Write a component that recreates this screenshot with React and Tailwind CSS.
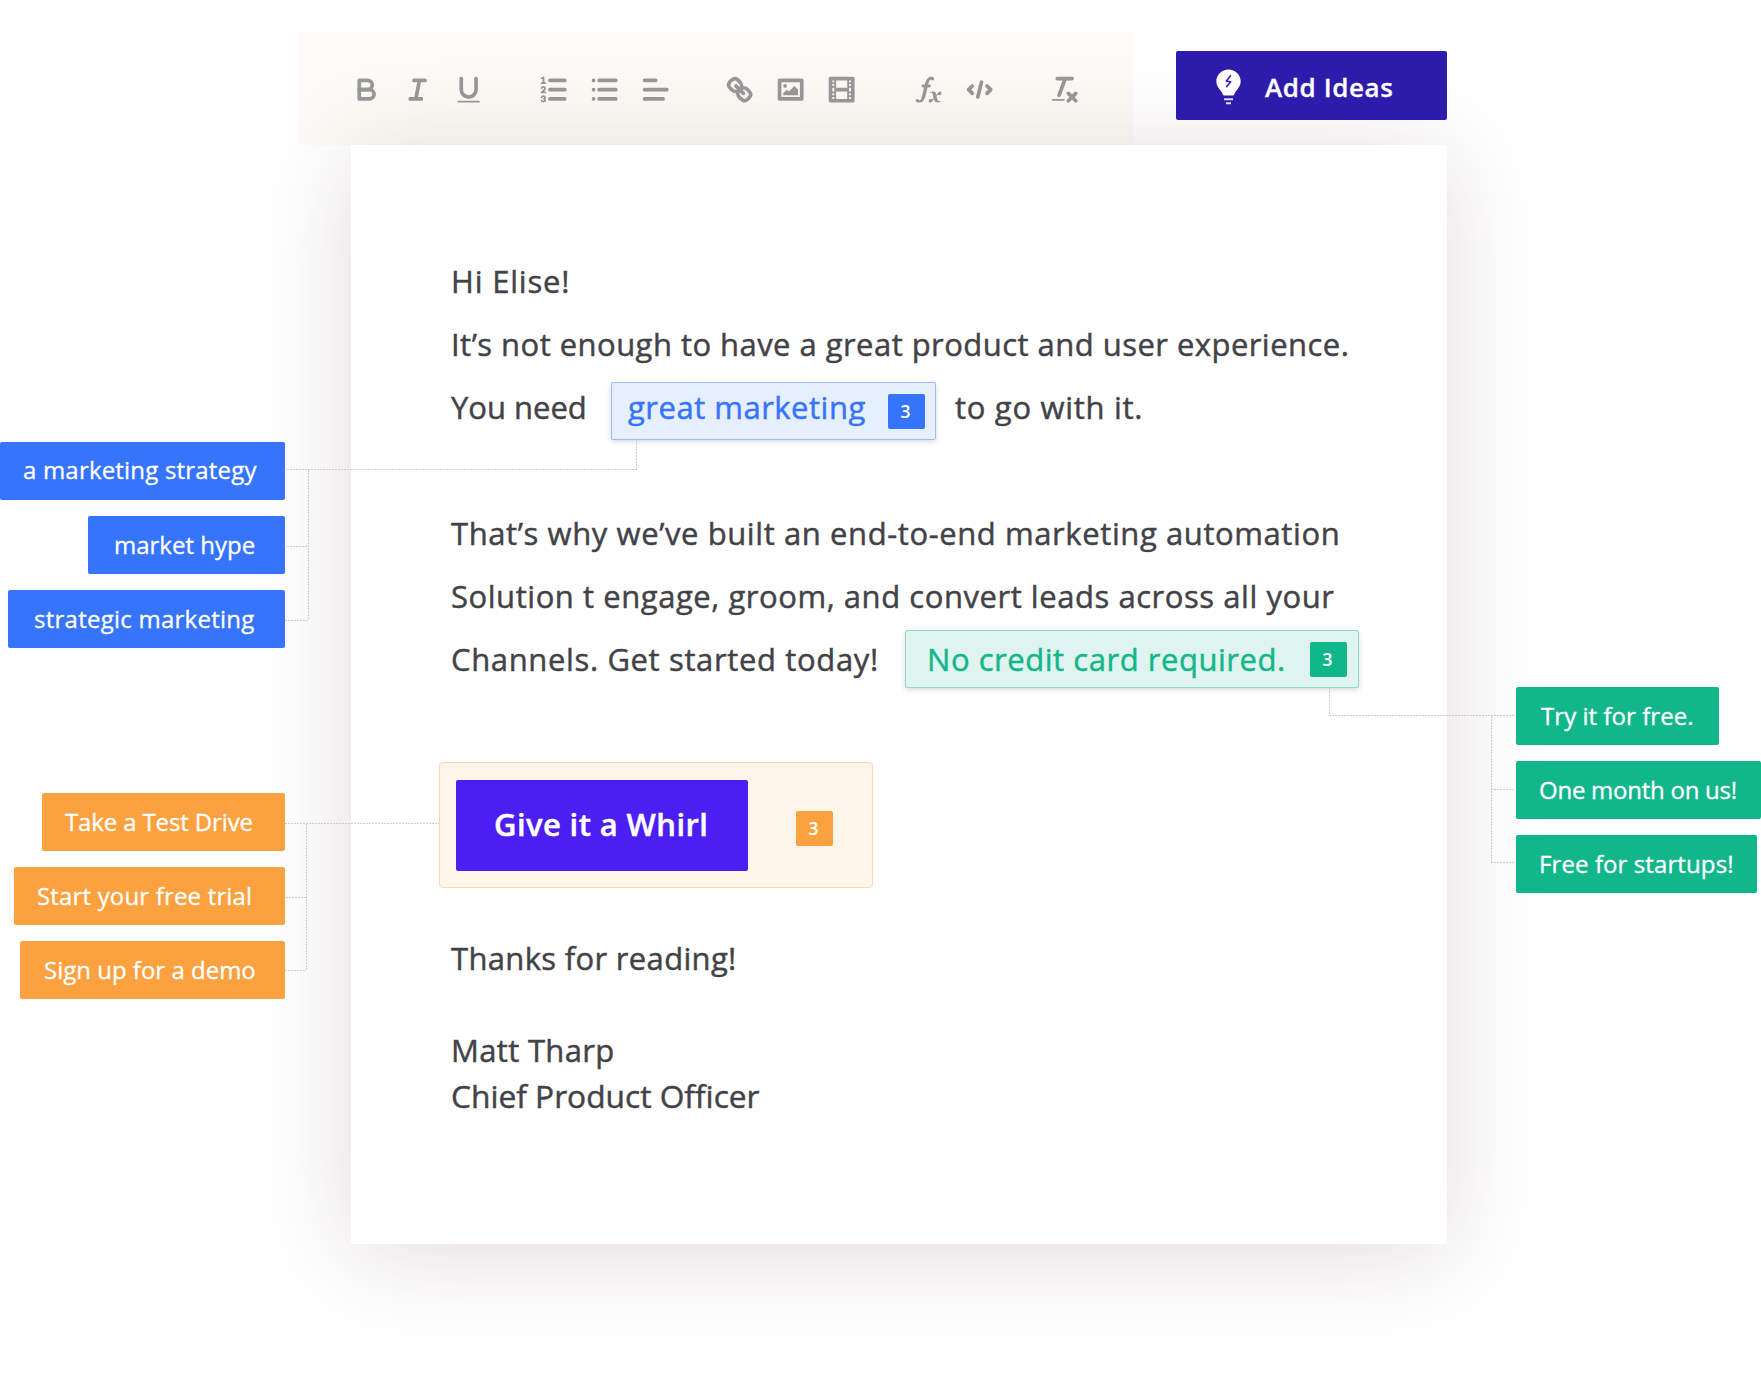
const icons = {
  bold: (
    <>
      <path d="M5,4H9.5A2.5,2.5,0,0,1,12,6.5v0A2.5,2.5,0,0,1,9.5,9H5V4Z" />
      <path d="M5,9h5.5A2.5,2.5,0,0,1,13,11.5v0A2.5,2.5,0,0,1,10.5,14H5V9Z" />
    </>
  ),
  italic: <path d="M7 4H13M5 14H11M8 14L10 4" />,
  underline: (
    <>
      <path d="M5,3V9a4.012,4.012,0,0,0,4,4H9a4.012,4.012,0,0,0,4-4V3" />
      <rect className="fill-current stroke-none" height="1" rx="0.5" width="12" x="3" y="15" />
    </>
  ),
  ordered: (
    <>
      <path d="M7 4H15M7 9H15M7 14H15" />
      <path strokeWidth="1" d="M2.5 5.5H4.5" />
      <path
        className="fill-current stroke-none"
        d="M3.5,6A0.5,0.5,0,0,1,3,5.5V3.085l-0.276.138A0.5,0.5,0,0,1,2.053,3c-0.124-.247-0.023-0.324.224-0.447l1-.5A0.5,0.5,0,0,1,4,2.5v3A0.5,0.5,0,0,1,3.5,6Z"
      />
      <path strokeWidth="1" d="M4.5,10.5h-2c0-.234,1.85-1.076,1.85-2.234A0.959,0.959,0,0,0,2.5,8.156" />
      <path
        strokeWidth="1"
        d="M2.5,14.846a0.959,0.959,0,0,0,1.85-.109A0.7,0.7,0,0,0,3.75,14a0.688,0.688,0,0,0,.6-0.736,0.959,0.959,0,0,0-1.85-.109"
      />
    </>
  ),
  bullet: <path d="M6 4H15M6 9H15M6 14H15M3 4H3.01M3 9H3.01M3 14H3.01" />,
  align: <path d="M3 9H15M3 14H13M3 4H9" />,
  link: (
    <>
      <path d="M7 7L11 11" />
      <path d="M8.9,4.577a3.476,3.476,0,0,1,.36,4.679A3.476,3.476,0,0,1,4.577,8.9C3.185,7.5,2.035,6.4,4.217,4.217S7.5,3.185,8.9,4.577Z" />
      <path d="M13.423,9.1a3.476,3.476,0,0,0-4.679-.36,3.476,3.476,0,0,0,.36,4.679c1.392,1.392,2.5,2.542,4.679.36S14.815,10.5,13.423,9.1Z" />
    </>
  ),
  image: (
    <>
      <rect height="10" width="12" x="3" y="4" strokeWidth="2" />
      <circle className="fill-current stroke-none" cx="6" cy="7" r="1" />
      <path className="fill-current stroke-none" d="M5 12V11L7 9L8 10L11 7L13 9V12Z" />
    </>
  ),
  video: (
    <>
      <rect height="12" width="12" x="3" y="3" />
      <path
        className="fill-current stroke-none"
        d="M5 3h1v12h-1zM12 3h1v12h-1zM5 8h8v2h-8zM3 5h3v1h-3zM3 7h3v1h-3zM3 10h3v1h-3zM3 12h3v1h-3zM12 5h3v1h-3zM12 7h3v1h-3zM12 10h3v1h-3zM12 12h3v1h-3z"
      />
    </>
  ),
  formula: (
    <g className="fill-current stroke-none">
      <path d="M11.759,2.482a2.561,2.561,0,0,0-3.53.607A7.656,7.656,0,0,0,6.8,6.2C6.109,9.188,5.275,14.677,4.15,14.927a1.545,1.545,0,0,0-1.3-.933A0.922,0.922,0,0,0,2,15.036S1.954,16,4.119,16s3.091-2.691,3.7-5.553c0.177-.826.36-1.726,0.554-2.6L8.775,6.2c0.381-1.421.807-2.521,1.306-2.676a1.014,1.014,0,0,0,1.02.56A0.966,0.966,0,0,0,11.759,2.482Z" />
      <rect height="1.6" rx="0.8" ry="0.8" width="5" x="5.15" y="6.2" />
      <path d="M13.663,12.027a1.662,1.662,0,0,1,.266-0.276q0.193,0.069.456,0.138a2.1,2.1,0,0,0,.535.069,1.075,1.075,0,0,0,.767-0.3,1.044,1.044,0,0,0,.314-0.8,0.84,0.84,0,0,0-.238-0.619,0.8,0.8,0,0,0-.594-0.239,1.154,1.154,0,0,0-.781.3,4.607,4.607,0,0,0-.781,1q-0.091.15-.218,0.346l-0.246.38c-0.068-.288-0.137-0.582-0.212-0.885-0.459-1.847-2.494-.984-2.941-0.8-0.482.2-.353,0.647-0.094,0.529a0.869,0.869,0,0,1,1.281.585c0.217,0.751.377,1.436,0.527,2.038a5.688,5.688,0,0,1-.362.467,2.69,2.69,0,0,1-.264.271q-0.221-.08-0.471-0.147a2.029,2.029,0,0,0-.522-0.066,1.079,1.079,0,0,0-.768.3A1.058,1.058,0,0,0,9,15.131a0.82,0.82,0,0,0,.832.852,1.134,1.134,0,0,0,.787-0.3,5.11,5.11,0,0,0,.776-0.993q0.141-.219.215-0.34c0.046-.076.122-0.194,0.223-0.346a2.786,2.786,0,0,0,.918,1.726,2.582,2.582,0,0,0,2.376-.185c0.317-.181.212-0.565,0-0.494A0.807,0.807,0,0,1,14.176,15a5.159,5.159,0,0,1-.913-2.446l0,0Q13.487,12.24,13.663,12.027Z" />
    </g>
  ),
  code: <path d="M5 7L3 9L5 11M13 7L15 9L13 11M10 5L8 13" />,
  clean: (
    <>
      <path d="M5 3H13M6 12L9.35 3M11 11L15 15M15 11L11 15" />
      <rect className="fill-current stroke-none" height="1" rx="0.5" width="7" x="2" y="14" />
    </>
  ),
};

const groups = [
  { names: ["bold", "italic", "underline"] },
  { names: ["ordered", "bullet", "align"] },
  { names: ["link", "image", "video"], className: "-ml-px" },
  { names: ["formula", "code"], className: "ml-[2px]" },
  { names: ["clean"] },
];

function Toolbar() {
  return (
    <div className="ml-[12px] mt-[32px] flex h-[113px] w-[836px] shrink-0 items-center gap-[34px] bg-[#fdfbf7] pl-[44px] pt-[3px] text-[#999]">
      {groups.map(({ names, className = "" }) => (
        <div key={names[0]} className={`flex ${className}`}>
          {names.map((name) => (
            <button key={name} aria-label={name} className="flex w-[51px] justify-center">
              <svg
                viewBox="0 0 18 18"
                className="size-[33.3px]"
                fill="none"
                stroke="currentColor"
                strokeWidth="2"
                strokeLinecap="round"
                strokeLinejoin="round"
              >
                {icons[name]}
              </svg>
            </button>
          ))}
        </div>
      ))}
    </div>
  );
}

function Bulb() {
  return (
    <svg viewBox="0 0 25 36" className="ml-[40px] mt-[2px] h-[36px] w-[25px]" fill="#fff">
      <path d="M12.5 0.5C5.8 0.5 0.3 5.7 0.3 12.3c0 4 2 6.5 4.2 9.2 1.1 1.4 1.9 2.9 2.3 4.1.2.7.7 1 1.4 1h8.6c.7 0 1.2-.3 1.4-1 .4-1.2 1.2-2.7 2.3-4.1 2.2-2.7 4.2-5.2 4.2-9.2C24.7 5.7 19.2 0.5 12.5 0.5Z" />
      <path d="M14.8 6.3L10.3 12.2L14.7 12.8L10.2 18.2" fill="none" stroke="#2d1bac" strokeWidth="1.5" strokeLinejoin="round" />
      <path d="M8 29.3h9v2h-9zM10 33.2h5v2h-5z" opacity="0.85" />
    </svg>
  );
}

function T({ children, className = "" }) {
  return <span className={`inline-block whitespace-pre ${className}`}>{children}</span>;
}

function Chip({ className, children }) {
  return (
    <div className={`flex h-[58px] shrink-0 items-center whitespace-pre rounded-[2px] text-[24px] text-white [-webkit-text-stroke:0.3px] ${className}`}>
      {children}
    </div>
  );
}

function Count({ className }) {
  return (
    <span className={`flex h-[35px] w-[37px] shrink-0 items-center justify-center rounded-[2px] pr-[2px] text-[18px] font-semibold leading-none tracking-normal text-white [-webkit-text-stroke:0px] ${className}`}>
      3
    </span>
  );
}

function Connectors() {
  return (
    <svg
      className="pointer-events-none absolute inset-0"
      width="1761"
      height="1396"
      fill="none"
      stroke="#cecece"
      strokeWidth="1"
      strokeDasharray="2 1"
    >
      <path d="M287 469.5H637M636.5 440V469M308.5 470V620M287 546.5H308M285 620.5H308" />
      <path d="M285 823.5H439M306.5 824V970M286 897.5H306M285 970.5H306" />
      <path d="M1329.5 688V715M1329 715.5H1514M1491.5 716V862M1491 789.5H1513M1491 862.5H1514" />
    </svg>
  );
}

export default function App() {
  return (
    <div className="relative flex h-[1396px] w-[1761px] overflow-hidden bg-white font-['Open_Sans',sans-serif] text-[#424247]">
      <aside className="z-10 flex w-[285px] shrink-0 flex-col items-end pt-[442px]">
        <div className="flex flex-col items-end gap-[16px]">
          <Chip className="w-[285px] bg-[#3574fb] pb-[2px] pl-[23px] tracking-[0.19px]">a marketing strategy</Chip>
          <Chip className="w-[197px] bg-[#3574fb] pl-[26px]">market hype</Chip>
          <Chip className="w-[277px] bg-[#3574fb] pl-[26px] tracking-[0.25px]">strategic marketing</Chip>
        </div>
        <div className="mt-[145px] flex flex-col items-end gap-[16px]">
          <Chip className="w-[243px] bg-[#fba140] pl-[23px] tracking-[-0.13px]">Take a Test Drive</Chip>
          <Chip className="w-[271px] bg-[#fba140] pl-[23px] tracking-[0.17px]">Start your free trial</Chip>
          <Chip className="w-[265px] bg-[#fba140] pl-[24px]">Sign up for a demo</Chip>
        </div>
      </aside>

      <main className="flex w-[1231px] shrink-0 flex-col">
        <header className="flex h-[145px] shrink-0">
          <Toolbar />
          <button className="z-10 ml-[43px] mt-[51px] flex h-[69px] w-[271px] items-center whitespace-pre rounded-[2px] bg-[#2d1bac] text-[26px] font-semibold text-white">
            <Bulb />
            <T className="ml-[24px] mt-[3px] tracking-[0.6px] [-webkit-text-stroke:0.3px]">Add Ideas</T>
          </button>
        </header>

        <article className="relative ml-[66px] flex h-[1099px] w-[1096px] flex-col rounded-[2px] bg-white pl-[100px] pt-[105px] text-[31px] leading-[63px] shadow-[0_10px_100px_rgba(80,50,40,0.17)] [-webkit-text-stroke:0.45px]">
          <p><T className="tracking-[0.8px]">Hi Elise!</T></p>
          <p><T className="tracking-[0.46px]">It’s not enough to have a great product and user experience.</T></p>
          <div className="flex h-[63px]">
            <T className="w-[160px]">You need</T>
            <span className="mt-[6px] flex h-[58px] w-[325px] items-center rounded-[2px] border border-[#9dbdf8] bg-[#e6effe] pl-[16px] text-[#3574fb] shadow-[0_2px_5px_rgba(0,0,0,0.15)]">
              <T className="-mt-[7px] w-[260px] tracking-[0.5px]">great marketing</T>
              <Count className="bg-[#3574fb]" />
            </span>
            <T className="ml-[19px] tracking-[0.7px]">to go with it.</T>
          </div>
          <p className="mt-[63px]"><T className="tracking-[0.59px]">That’s why we’ve built an end-to-end marketing automation</T></p>
          <p><T className="tracking-[0.55px]">Solution t engage, groom, and convert leads across all your</T></p>
          <div className="flex h-[63px]">
            <T className="w-[454px] tracking-[0.64px]">Channels. Get started today!</T>
            <span className="mt-[2px] flex h-[58px] w-[454px] items-center rounded-[2px] border border-[#8fdac5] bg-[#dff4ee] pl-[21px] text-[#12b68b] shadow-[0_2px_5px_rgba(0,0,0,0.15)]">
              <T className="w-[383px] tracking-[0.54px]">No credit card required.</T>
              <Count className="bg-[#12b68b]" />
            </span>
          </div>
          <div className="-ml-[12px] mt-[71px] flex h-[126px] w-[434px] items-center rounded-[4px] border border-[#fbd9b3] bg-[#fef5ea] pl-[16px]">
            <button className="flex h-[91px] w-[292px] items-center rounded-[2px] bg-[#4c1ef1] pl-[38px] text-[31px] font-semibold text-white">
              <T className="-mt-[2px] tracking-[0.4px]">Give it a Whirl</T>
            </button>
            <Count className="ml-[48px] mt-[6px] bg-[#fba140]" />
          </div>
          <p className="mt-[39px]"><T className="tracking-[0.33px]">Thanks for reading!</T></p>
          <p className="mt-[37px] leading-[46px]"><T className="tracking-[0.34px]">Matt Tharp</T></p>
          <p className="text-[31.7px] leading-[46px]"><T>Chief Product Officer</T></p>
        </article>
      </main>

      <aside className="z-10 flex w-[245px] shrink-0 flex-col gap-[16px] pt-[687px]">
        <Chip className="w-[203px] bg-[#12b68b] pl-[25px] tracking-[0.05px]">Try it for free.</Chip>
        <Chip className="w-[245px] bg-[#12b68b] pl-[23px] tracking-[-0.25px]">One month on us!</Chip>
        <Chip className="w-[241px] bg-[#12b68b] pl-[23px] tracking-[0.1px]">Free for startups!</Chip>
      </aside>

      <Connectors />
    </div>
  );
}
